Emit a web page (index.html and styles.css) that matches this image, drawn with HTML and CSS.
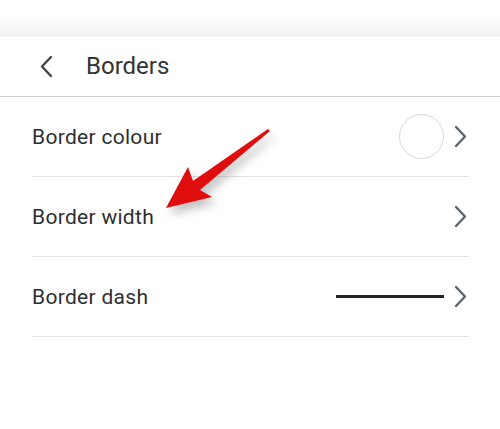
FILE: index.html
```html
<!DOCTYPE html>
<html lang="en">

<head>
    <meta charset="UTF-8">
    <meta name="viewport" content="width=device-width, initial-scale=1.0">
    <title>Borders</title>

    <link rel="stylesheet" href="styles.css">

</head>

<body>
    <div class="top-shade"></div>

    <div class="panel">
        <div class="header">
            <svg class="back" width="14" height="24" viewBox="0 0 14 24">
                <polyline points="11,2 2,11.5 11,21" fill="none" stroke="#444" stroke-width="2.4" stroke-linecap="round" stroke-linejoin="round" />
            </svg>
            <h1>Borders</h1>
        </div>

        <ul class="list">
            <li class="row">
                <span class="label">Border colour</span>
                <span class="value">
                    <span class="swatch"></span>
                    <svg class="chev" width="14" height="24" viewBox="0 0 14 24">
                        <polyline points="3,2 12,11.5 3,21" fill="none" stroke="#5f6368" stroke-width="2.4" stroke-linecap="round" stroke-linejoin="round" />
                    </svg>
                </span>
            </li>
            <li class="row">
                <span class="label">Border width</span>
                <span class="value">
                    <svg class="chev" width="14" height="24" viewBox="0 0 14 24">
                        <polyline points="3,2 12,11.5 3,21" fill="none" stroke="#5f6368" stroke-width="2.4" stroke-linecap="round" stroke-linejoin="round" />
                    </svg>
                </span>
            </li>
            <li class="row">
                <span class="label">Border dash</span>
                <span class="value">
                    <span class="dash"></span>
                    <svg class="chev" width="14" height="24" viewBox="0 0 14 24">
                        <polyline points="3,2 12,11.5 3,21" fill="none" stroke="#5f6368" stroke-width="2.4" stroke-linecap="round" stroke-linejoin="round" />
                    </svg>
                </span>
            </li>
        </ul>
    </div>

    <!-- red annotation arrow -->
    <svg class="pointer" width="500" height="429" viewBox="0 0 500 429">
        <defs>
            <filter id="shade" x="-30%" y="-30%" width="160%" height="160%">
                <feDropShadow dx="4" dy="6" stdDeviation="5" flood-color="#000" flood-opacity="0.25" />
            </filter>
        </defs>
        <polygon points="268,129 270,131 200,190 212,197 166,208 188,167 193,181" fill="#e00b0b" filter="url(#shade)" />
    </svg>
</body>

</html>
```

FILE: styles.css
```css
* {
    margin: 0;
    padding: 0;
    list-style: none;
    box-sizing: border-box;
}

body {
    width: 500px;
    height: 429px;
    background: #fff;
    font-family: Roboto, "Noto Sans", sans-serif;
    color: #2f2f2f;
    overflow: hidden;
    position: relative;
}

.top-shade {
    height: 37px;
    background: linear-gradient(to bottom, #fff 0, #fff 13px, #f2f2f2 37px);
}

.header {
    height: 60px;
    display: flex;
    align-items: center;
    border-bottom: 1.5px solid #cfcfd2;
    padding-left: 40px;
}

.back {
    display: block;
    margin-right: 32px;
    margin-top: 1px;
}

.header h1 {
    font-size: 24px;
    font-weight: 400;
    color: #333;
    margin-top: -1px;
}

.list {
    margin: 0 31px 0 32px;
}

.row {
    height: 80px;
    display: flex;
    align-items: center;
    justify-content: space-between;
    border-bottom: 1px solid #e2e2e2;
}

.row .label {
    font-size: 21px;
    letter-spacing: 0.3px;
}

.value {
    display: flex;
    align-items: center;
    padding-right: 2px;
}

.chev {
    display: block;
}

.swatch {
    width: 45px;
    height: 45px;
    border-radius: 50%;
    border: 1px solid #d9d9d9;
    margin-right: 9px;
}

.dash {
    width: 108px;
    height: 3.5px;
    background: #222;
    margin-right: 9px;
}

.pointer {
    position: absolute;
    left: 0;
    top: 0;
}
```
